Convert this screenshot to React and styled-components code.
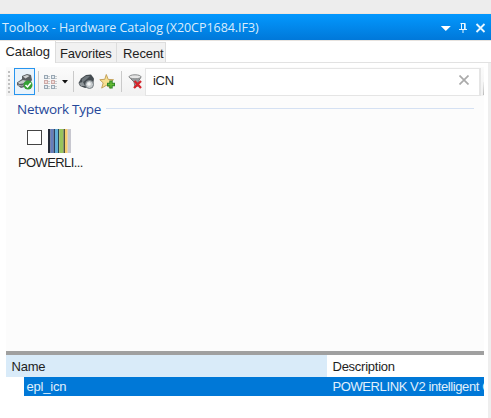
import React from "react";
import styled, { createGlobalStyle } from "styled-components";

const Global = createGlobalStyle`
  * { box-sizing: border-box; }
  body { margin: 0; background: #fff; overflow: hidden; font-family: "Liberation Sans", Arial, sans-serif; color: #1e1e1e; }
`;
const Window = styled.main`
  width: 491px; height: 418px; display: flex; flex-direction: column; overflow: hidden; background: #fff;
`;
const TopStrip = styled.div`
  height: 14px; flex: none; background: #ededed; border-bottom: 1px solid #eee6df;
`;
const TitleBar = styled.header`
  height: 26px; flex: none; display: flex; align-items: center; justify-content: space-between;
  padding: 0 5px 0 2px; background: linear-gradient(#0398fe, #0078d9);
  color: #d9edfc; font: 12.5px "Open Sans", "Noto Sans", sans-serif;
`;
const Title = styled.span`
  white-space: pre; letter-spacing: -.04px;
`;
const WindowButtons = styled.div`
  display: flex; padding-top: 1px; svg { display: block; }
`;
const Tabs = styled.nav`
  height: 23px; flex: none; display: flex; align-items: flex-end;
  border-top: 1px solid #e7e3df; border-bottom: 1px solid #e2e2e2;
`;
const Tab = styled.div`
  width: ${(p) => p.$width}px; height: ${(p) => (p.$active ? 22 : 20)}px;
  margin-bottom: ${(p) => (p.$active ? -1 : 0)}px;
  padding: ${(p) => (p.$active ? 3 : 3)}px 0 0 ${(p) => p.$pad}px;
  background: ${(p) => (p.$active ? "#fff" : "#f1f1f1")};
  border-right: 1px solid #dcdcdc; border-top: ${(p) => (p.$active ? "0" : "1px solid #dedede")};
  font-size: 13px; line-height: 15px; letter-spacing: ${(p) => p.$spacing}px; white-space: nowrap;
`;
const Body = styled.section`
  flex: 1; min-height: 0; width: 491px; padding: 4px 4px 0 6px;
  border-right: 3px solid #eeeeee;
  display: flex; flex-direction: column;
`;
const Panel = styled.div`
  width: 478px; flex: none; display: flex; flex-direction: column;
`;
const Toolbar = styled.div`
  height: 29px; flex: none; display: flex; align-items: center; background: linear-gradient(#fbfbfb, #f1f1f1);
`;
const Grip = styled.div`
  width: 2px; height: 22px; margin: 0 4px 0 2px;
  background: repeating-linear-gradient(#c0c0c0 0 2px, transparent 2px 4px);
`;
const Tool = styled.div`
  width: ${(p) => p.$width}px; height: 27px; margin-left: ${(p) => p.$left || 0}px; flex: none;
  display: flex; align-items: center; justify-content: center;
  svg { display: block; flex: none; }
`;
const ActiveTool = styled(Tool)`
  border: 1px solid #2795ef; background: #e9f3fb;
`;
const Divider = styled.div`
  width: 1px; height: 21px; background: #cacaca; margin: 0 ${(p) => p.$right}px 0 ${(p) => p.$left}px;
`;
const Search = styled.div`
  width: 336px; height: 28px; flex: none; display: flex; align-items: center; justify-content: space-between;
  margin-left: auto; padding: 0 10px 3px 7px; background: #fff; border: 1px solid #e5e5e5;
  border-right-width: 2px; font-size: 13px; letter-spacing: -.3px;
`;
const ToolbarEnd = styled.div`
  width: 1px; height: 13px; margin: 14px 0 0 2px; background: linear-gradient(#eee, #bbb);
`;
const Catalog = styled.div`
  height: 255px; flex: none; background: #fcfcfc; padding: 1px 10px 0 11px;
`;
const GroupTitle = styled.div`
  display: flex; align-items: center; gap: 5px; height: 23px;
  color: #254799; font: 13.5px "Open Sans", "Noto Sans", sans-serif; letter-spacing: -.27px; white-space: nowrap;
  &::after { content: ""; height: 1px; flex: 1; background: #d5e1f3; }
`;
const CatalogItem = styled.div`
  width: 74px; margin-top: 9px; padding-left: 1px; font-size: 13px;
`;
const ItemIcon = styled.div`
  display: flex; gap: 6px; height: 24px; padding-left: 9px;
`;
const Checkbox = styled.div`
  width: 15px; height: 15px; margin-top: 1px; background: #fff; border: 1px solid #444;
`;
const ItemLabel = styled.div`
  line-height: 16px; margin-top: 2px; letter-spacing: -.6px; white-space: nowrap;
`;
const Table = styled.div`
  border-top: 4px solid #a0a0a0; font-size: 13px;
`;
const TableRow = styled.div`
  display: grid; grid-template-columns: 321px 157px; overflow: hidden; white-space: nowrap;
  height: 22px; line-height: 23px;
`;
const SelectedRow = styled(TableRow)`
  grid-template-columns: 303px 157px; margin-left: 18px; height: 19px; line-height: 19px;
  background: #0078d7; color: #e1f0fc;
`;
const Cell = styled.div`
  padding-left: ${(p) => p.$pad}px; background: ${(p) => (p.$sorted ? "#d9ebf9" : "transparent")};
  letter-spacing: ${(p) => p.$spacing || 0}px; overflow: hidden;
`;

const CatalogIcon = ({ checked }) => (
  <svg width="17" height="17" viewBox="0 0 17 17">
    {checked ? (
      <>
        <path d="M1 9.5 6 6 6 3l5-2 4 1 1 5-4 6-7 2-4-3Z" fill="#5b6063" />
        <path d="m7 3.5 4-1.5 2.5 1-4 2.5Z" fill="#cfd2d3" />
        <path d="M2 9.5 7 7l4 1-4 2.5-4 .5Z" fill="#c5c9ca" />
        <path d="m2 12 4 1 3-2" fill="none" stroke="#a8adaf" />
        <circle cx="12" cy="12" r="4.5" fill="#35a135" />
        <path d="m9.5 12 2 2 3.3-4" fill="none" stroke="#fff" strokeWidth="1.5" />
      </>
    ) : (
      <>
        <path d="M.5 10 3 5.5 8 2l5-.5 3 4-1 8-8 1.5-5-2Z" fill="#444b50" />
        <path d="m4 6 4-3 4 0-3 3-5 4Z" fill="#6f777c" />
        <path d="m1 10 4-1 2 4-4 0Z" fill="#8f969a" />
        <circle cx="11.5" cy="11.5" r="4" fill="#c5cacd" stroke="#777f84" />
        <circle cx="11" cy="11" r="1.8" fill="#f2f4f5" />
      </>
    )}
  </svg>
);
const ListIcon = () => (
  <svg width="14" height="14" viewBox="0 0 14 14">
    {[0, 5, 10].map((y, i) => [0, 7].map((x) => (
      <g key={`${x}-${y}`}>
        <rect x={x + 0.5} y={y + 0.5} width="3" height="3" fill={i === 1 ? "#f3dcda" : "#e5ebf0"} stroke={i === 1 ? "#cdaaa7" : "#9aa8b4"} />
        <path d={`M${x + 4} ${y + 1.5}h2M${x + 4} ${y + 3.5}h2`} stroke="#c6ccd0" />
      </g>
    )))}
  </svg>
);
const StarIcon = () => (
  <svg width="17" height="17" viewBox="0 0 17 17">
    <path d="m7.3 1.5 1.9 4.9 5.3.3-4.2 3.4 1.4 5-4.4-2.8-4.6 2.8 1.5-5.2L.8 6.7 5.8 6.3Z" fill="#f7df90" stroke="#c5a25b" />
    <path d="M12 7.5v8M8 11.5h8" stroke="#31852b" strokeWidth="3.4" />
    <path d="M12 8.5v6M9 11.5h6" stroke="#65bd34" strokeWidth="1.4" />
  </svg>
);
const FilterIcon = () => (
  <svg width="15" height="17" viewBox="0 0 15 17">
    <path d="m1 4 5 5 1 5 3-1V9l3-5Z" fill="#999d9f" stroke="#77797b" />
    <ellipse cx="7" cy="3.8" rx="6" ry="2" fill="#e6e6e6" stroke="#898b8c" />
    <path d="m6.5 8 6.5 7M13 8l-7 7" stroke="#d4232a" strokeWidth="2.3" />
  </svg>
);
const PowerlinkIcon = () => (
  <svg width="23" height="24" viewBox="0 0 23 24">
    {[[0, 2.5, "#252b38"], [2.5, 3, "#667dbd"], [5.5, 1.5, "#2c3e60"], [7, 3, "#64afd9"], [10, 1.3, "#2b4654"], [11.3, 4.2, "#98c45d"], [15.5, 1.5, "#4b513d"], [17, 2.7, "#f8cc70"], [19.7, 3.3, "#c8c8d0"]].map(([x, w, c]) => (
      <rect key={x} x={x} width={w} height="24" fill={c} />
    ))}
  </svg>
);

export default function App() {
  return (
    <>
      <Global />
      <Window>
        <TopStrip />
        <TitleBar>
          <Title>Toolbox - Hardware Catalog (X20CP1684.IF3)</Title>
          <WindowButtons>
            <svg width="46" height="12" viewBox="0 0 46 12" fill="none" stroke="#e8f6ff">
              <path d="M.8 4h10L5.8 9Z" fill="#fff" stroke="none" />
              <path d="M20.5 1.5h5M21.5 1.5v6M24.5 1.5v6M19 7.5h8M23 8v3" /><path d="M25.2 2v5" />
              <path d="m36.5 2 8 8M44.5 2l-8 8" strokeWidth="1.8" />
            </svg>
          </WindowButtons>
        </TitleBar>
        <Tabs>
          <Tab $width={56} $pad={5.5} $active $spacing={-0.05}>Catalog</Tab>
          <Tab $width={61} $pad={4} $spacing={-0.2}>Favorites</Tab>
          <Tab $width={49} $pad={6} $spacing={-0.1}>Recent</Tab>
        </Tabs>
        <Body>
          <Panel>
            <Toolbar>
              <Grip />
              <ActiveTool $width={21}><CatalogIcon checked /></ActiveTool>
              <Divider $left={3} $right={5} />
              <Tool $width={14}><ListIcon /></Tool>
              <Tool $width={6} $left={4}><svg width="6" height="4"><path d="M0 0h6L3 3.5Z" fill="#111" /></svg></Tool>
              <Divider $left={5} $right={4} />
              <Tool $width={17}><CatalogIcon /></Tool>
              <Tool $width={17} $left={4}><StarIcon /></Tool>
              <Divider $left={5} $right={6} />
              <Tool $width={15}><FilterIcon /></Tool>
              <Search><span>iCN</span><svg width="10" height="10"><path d="m.5.5 9 9m0-9-9 9" stroke="#aaa" strokeWidth="1.7" /></svg></Search>
              <ToolbarEnd />
            </Toolbar>
            <Catalog>
              <GroupTitle>Network Type</GroupTitle>
              <CatalogItem>
                <ItemIcon><Checkbox /><PowerlinkIcon /></ItemIcon>
                <ItemLabel>POWERLI...</ItemLabel>
              </CatalogItem>
            </Catalog>
            <Table>
              <TableRow><Cell $pad={5.5} $sorted $spacing={-0.2}>Name</Cell><Cell $pad={5.5} $spacing={-0.25}>Description</Cell></TableRow>
              <SelectedRow><Cell $pad={2.5} $spacing={-0.2}>epl_icn</Cell><Cell $pad={5.5} $spacing={-0.4}>POWERLINK V2 intelligent C</Cell></SelectedRow>
            </Table>
          </Panel>
        </Body>
      </Window>
    </>
  );
}
